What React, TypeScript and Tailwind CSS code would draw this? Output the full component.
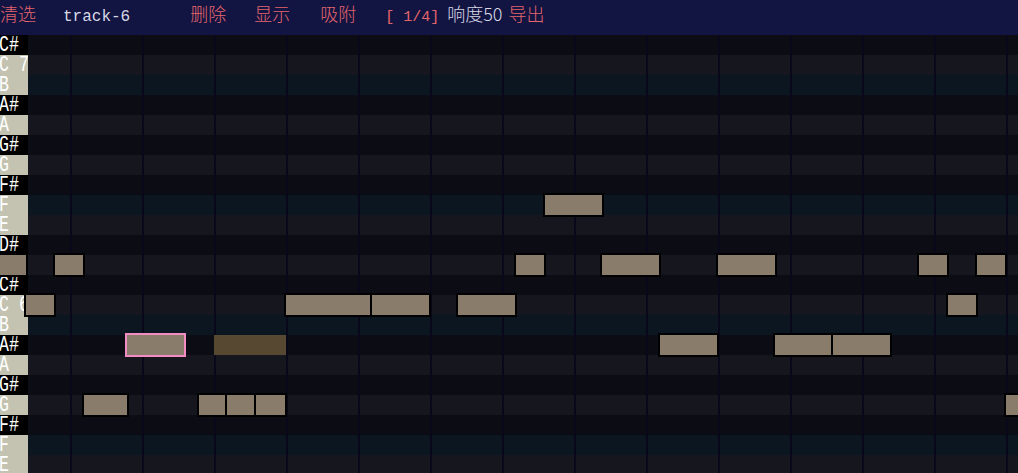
import React from "react";

type Row = { label: string; kind: "black" | "white" | "teal" };

const ROWS: Row[] = [
  { label: "C#", kind: "black" },
  { label: "C 7", kind: "white" },
  { label: "B", kind: "teal" },
  { label: "A#", kind: "black" },
  { label: "A", kind: "white" },
  { label: "G#", kind: "black" },
  { label: "G", kind: "white" },
  { label: "F#", kind: "black" },
  { label: "F", kind: "teal" },
  { label: "E", kind: "white" },
  { label: "D#", kind: "black" },
  { label: "D", kind: "white" },
  { label: "C#", kind: "black" },
  { label: "C 6", kind: "white" },
  { label: "B", kind: "teal" },
  { label: "A#", kind: "black" },
  { label: "A", kind: "white" },
  { label: "G#", kind: "black" },
  { label: "G", kind: "white" },
  { label: "F#", kind: "black" },
  { label: "F", kind: "teal" },
  { label: "E", kind: "white" },
];

const laneBg = {
  black: "bg-[#0c0c15]",
  white: "bg-[#16161f]",
  teal: "bg-[#0b1620]",
};

const keyBg = {
  black: "bg-black",
  white: "bg-[#c4c3b1]",
  teal: "bg-[#c4c3b1]",
};

type Note = { row: number; x: number; w: number; kind?: "sel" | "ghost" };

// x / w are the outer box incl. the 2px border
const NOTES: Note[] = [
  { row: 8, x: 543, w: 61 },

  { row: 11, x: -5, w: 33 },
  { row: 11, x: 53, w: 32 },
  { row: 11, x: 514, w: 32 },
  { row: 11, x: 600, w: 61 },
  { row: 11, x: 716, w: 61 },
  { row: 11, x: 917, w: 32 },
  { row: 11, x: 975, w: 32 },

  { row: 13, x: 24, w: 32 },
  { row: 13, x: 284, w: 88 },
  { row: 13, x: 370, w: 61 },
  { row: 13, x: 456, w: 61 },
  { row: 13, x: 946, w: 32 },

  { row: 15, x: 125, w: 61, kind: "sel" },
  { row: 15, x: 214, w: 72, kind: "ghost" },
  { row: 15, x: 658, w: 61 },
  { row: 15, x: 773, w: 60 },
  { row: 15, x: 831, w: 61 },

  { row: 18, x: 82, w: 47 },
  { row: 18, x: 197, w: 30 },
  { row: 18, x: 225, w: 31 },
  { row: 18, x: 254, w: 33 },
  { row: 18, x: 1004, w: 40 },
];

const cjk = "font-['Noto_Sans_CJK_SC',sans-serif] font-light";
const mono = "font-['Liberation_Mono','Noto_Sans_CJK_SC',monospace]";

function TopBar() {
  return (
    <div className="h-[35px] bg-[#121442] flex items-baseline pt-[4px] text-[18px] leading-[18px] whitespace-pre">
      <span className={`${cjk} text-[#e4666c]`}>清选</span>
      <span className={`${mono} ml-[27px] text-[16px] text-[#d8d8e6]`}>track-6</span>
      <span className={`${cjk} ml-[60px] text-[#e4666c]`}>删除</span>
      <span className={`${cjk} ml-[28px] text-[#e4666c]`}>显示</span>
      <span className={`${cjk} ml-[30px] text-[#e4666c]`}>吸附</span>
      <span className={`${mono} ml-[29px] text-[15px] text-[#e4666c]`}>[ 1/4]</span>
      <span className={`${cjk} ml-[8px] text-[#d8d8e6]`}>响度50</span>
      <span className={`${cjk} ml-[6px] text-[#e4666c]`}>导出</span>
    </div>
  );
}

function NoteBox({ n }: { n: Note }) {
  if (n.kind === "ghost") {
    return (
      <div
        className="absolute h-[20px] bg-[#574832]"
        style={{ left: n.x, top: n.row * 20, width: n.w }}
      />
    );
  }
  return (
    <div
      className={`absolute h-[24px] border-2 bg-[#8a7c6a] ${
        n.kind === "sel" ? "border-[#f38cc2]" : "border-black"
      }`}
      style={{ left: n.x, top: n.row * 20 - 2, width: n.w }}
    />
  );
}

export default function App() {
  return (
    <div className="w-[1018px] h-[473px] overflow-hidden bg-[#0c0c15]">
      <TopBar />
      <div className="relative flex h-[438px] overflow-hidden">
        <div className="w-[28px] shrink-0 flex flex-col">
          {ROWS.map((r, i) => (
            <div key={i} className={`h-[20px] shrink-0 overflow-hidden ${keyBg[r.kind]}`}>
              <span className="block -ml-[1px] origin-top-left scale-x-[0.92] scale-y-[1.25] whitespace-pre font-['Liberation_Mono',monospace] text-[18px] leading-[16px] text-white">
                {r.label}
              </span>
            </div>
          ))}
        </div>
        <div className="relative flex-1 flex flex-col">
          {ROWS.map((r, i) => (
            <div key={i} className={`h-[20px] shrink-0 ${laneBg[r.kind]}`} />
          ))}
          <div className="absolute inset-0 flex pointer-events-none">
            <div className="w-[42px] shrink-0" />
            {Array.from({ length: 14 }).map((_, i) => (
              <div key={i} className="w-[72px] shrink-0 border-l-2 border-[#08081a]" />
            ))}
          </div>
        </div>
        {NOTES.map((n, i) => (
          <NoteBox key={i} n={n} />
        ))}
      </div>
    </div>
  );
}
